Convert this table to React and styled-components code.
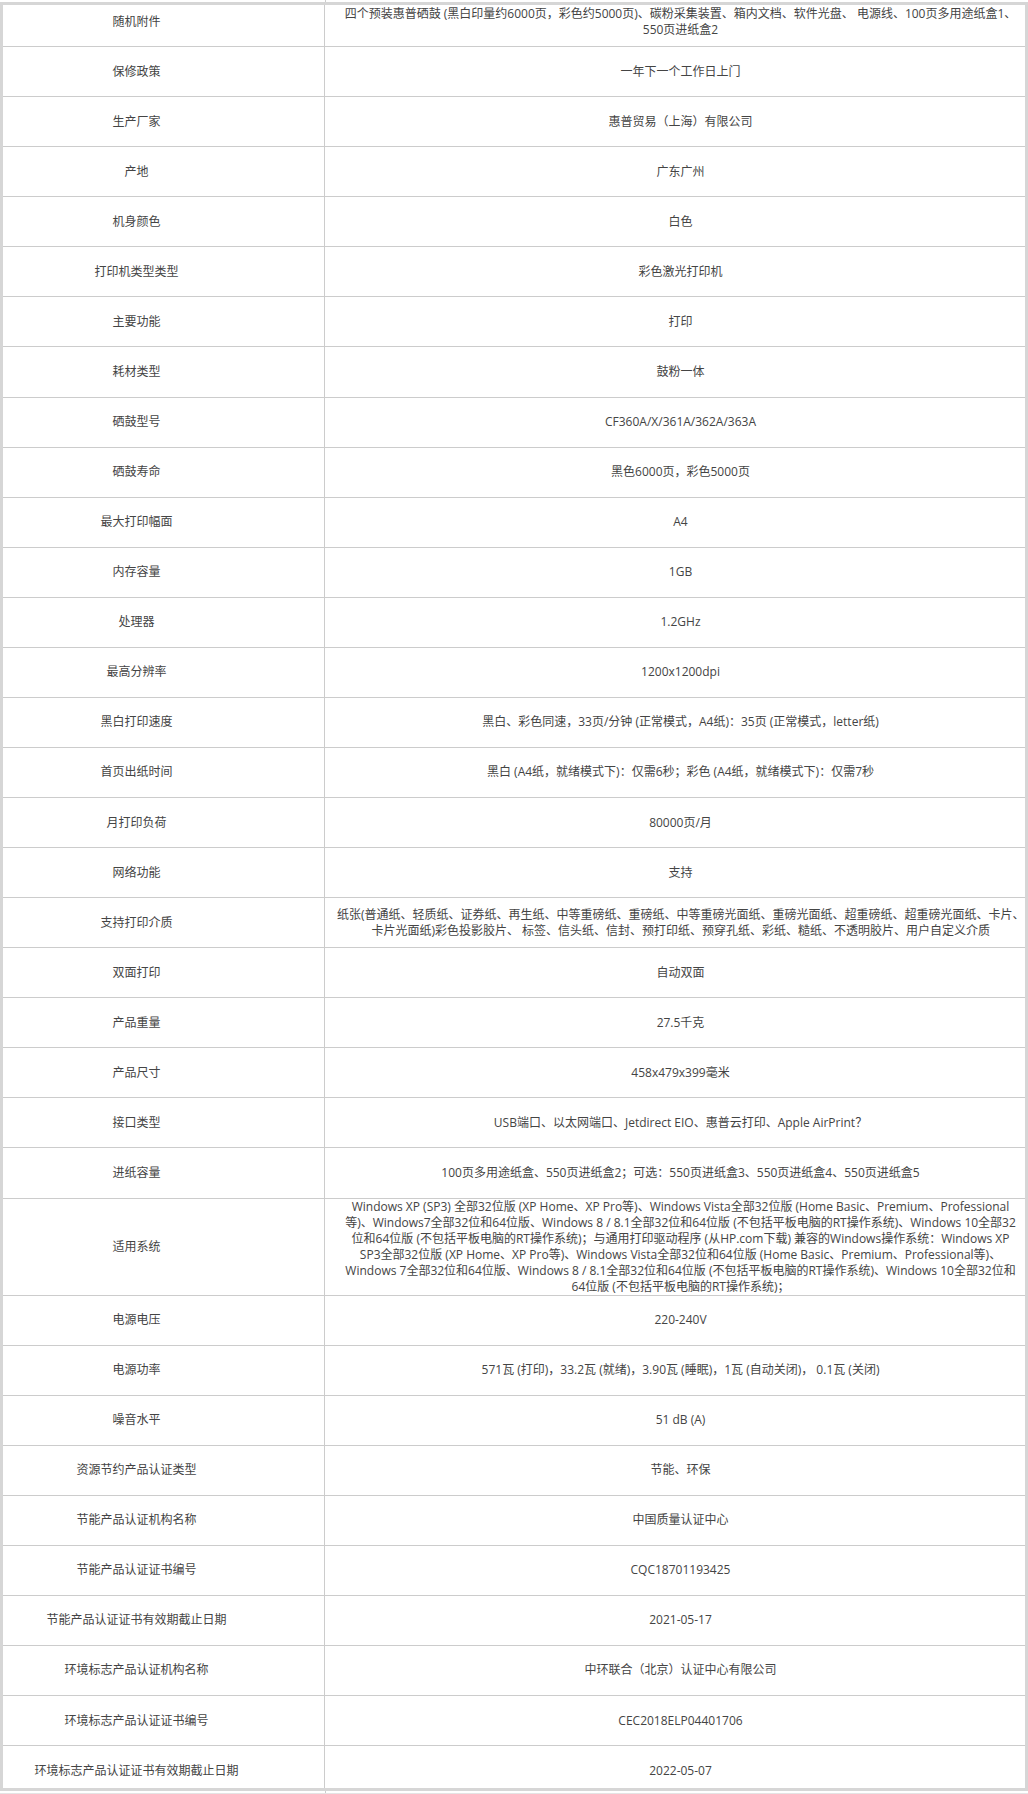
import React from "react";
import styled, { createGlobalStyle } from "styled-components";

const specs = [
  [
    "随机附件",
    [
      "四个预装惠普硒鼓 (黑白印量约6000页，彩色约5000页)、碳粉采集装置、箱内文档、软件光盘、 电源线、100页多用途纸盒1、",
      "550页进纸盒2",
    ],
  ],
  ["保修政策", "一年下一个工作日上门"],
  ["生产厂家", "惠普贸易（上海）有限公司"],
  ["产地", "广东广州"],
  ["机身颜色", "白色"],
  ["打印机类型类型", "彩色激光打印机"],
  ["主要功能", "打印"],
  ["耗材类型", "鼓粉一体"],
  ["硒鼓型号", "CF360A/X/361A/362A/363A"],
  ["硒鼓寿命", "黑色6000页，彩色5000页"],
  ["最大打印幅面", "A4"],
  ["内存容量", "1GB"],
  ["处理器", "1.2GHz"],
  ["最高分辨率", "1200x1200dpi"],
  ["黑白打印速度", "黑白、彩色同速，33页/分钟 (正常模式，A4纸)：35页 (正常模式，letter纸)"],
  ["首页出纸时间", "黑白 (A4纸，就绪模式下)：仅需6秒；彩色 (A4纸，就绪模式下)：仅需7秒"],
  ["月打印负荷", "80000页/月"],
  ["网络功能", "支持"],
  [
    "支持打印介质",
    [
      "纸张(普通纸、轻质纸、证券纸、再生纸、中等重磅纸、重磅纸、中等重磅光面纸、重磅光面纸、超重磅纸、超重磅光面纸、卡片、",
      "卡片光面纸)彩色投影胶片、 标签、信头纸、信封、预打印纸、预穿孔纸、彩纸、糙纸、不透明胶片、用户自定义介质",
    ],
  ],
  ["双面打印", "自动双面"],
  ["产品重量", "27.5千克"],
  ["产品尺寸", "458x479x399毫米"],
  ["接口类型", "USB端口、以太网端口、Jetdirect EIO、惠普云打印、Apple AirPrint？"],
  ["进纸容量", "100页多用途纸盒、550页进纸盒2；可选：550页进纸盒3、550页进纸盒4、550页进纸盒5"],
  [
    "适用系统",
    [
      "Windows XP (SP3) 全部32位版 (XP Home、XP Pro等)、Windows Vista全部32位版 (Home Basic、Premium、Professional",
      "等)、Windows7全部32位和64位版、Windows 8 / 8.1全部32位和64位版 (不包括平板电脑的RT操作系统)、Windows 10全部32",
      "位和64位版 (不包括平板电脑的RT操作系统)；与通用打印驱动程序 (从HP.com下载) 兼容的Windows操作系统：Windows XP",
      "SP3全部32位版 (XP Home、XP Pro等)、Windows Vista全部32位和64位版 (Home Basic、Premium、Professional等)、",
      "Windows 7全部32位和64位版、Windows 8 / 8.1全部32位和64位版 (不包括平板电脑的RT操作系统)、Windows 10全部32位和",
      "64位版 (不包括平板电脑的RT操作系统)；",
    ],
  ],
  ["电源电压", "220-240V"],
  ["电源功率", "571瓦 (打印)，33.2瓦 (就绪)，3.90瓦 (睡眠)，1瓦 (自动关闭)， 0.1瓦 (关闭)"],
  ["噪音水平", "51 dB (A)"],
  ["资源节约产品认证类型", "节能、环保"],
  ["节能产品认证机构名称", "中国质量认证中心"],
  ["节能产品认证证书编号", "CQC18701193425"],
  ["节能产品认证证书有效期截止日期", "2021-05-17"],
  ["环境标志产品认证机构名称", "中环联合（北京）认证中心有限公司"],
  ["环境标志产品认证证书编号", "CEC2018ELP04401706"],
  ["环境标志产品认证证书有效期截止日期", "2022-05-07"],
];

const App = () => {
  return (
    <Page>
      <GlobalStyle />
      <Edge>
        <span />
        <Rule />
      </Edge>
      <Frame>
        <Sheet>
          {specs.map(([label, value]) => (
            <Row key={label}>
              <Label>{label}</Label>
              <Value>
                {(Array.isArray(value) ? value : [value]).map((line, i) => (
                  <Line key={i}>{line}</Line>
                ))}
              </Value>
            </Row>
          ))}
        </Sheet>
      </Frame>
      <Edge $closing>
        <span />
        <Rule />
      </Edge>
    </Page>
  );
};

export default App;

const GlobalStyle = createGlobalStyle`
  html, body {
    margin: 0;
    padding: 0;
    background: #fff;
  }
  * {
    box-sizing: border-box;
  }
`;
const Page = styled.div`
  width: 1028px;
  font-family: "Open Sans", "Noto Sans CJK SC", sans-serif;
  font-size: 12px;
  line-height: 16px;
  color: #444;
`;
const Edge = styled.div`
  display: grid;
  grid-template-columns: 325px 1px;
  height: ${(p) => (p.$closing ? "3px" : "2px")};
  border-bottom: ${(p) => (p.$closing ? "1px solid #e4e4e4" : "none")};
`;
const Rule = styled.div`
  background: #ccc;
`;
const Frame = styled.div`
  width: 1028px;
  height: 1789px;
  border: 3px solid #d6d6d6;
  overflow: hidden;
`;
const Sheet = styled.div`
  margin-top: -8px;
`;
const Row = styled.div`
  display: grid;
  grid-template-columns: 322px 1fr;
  border-bottom: 1px solid #ccc;
`;
const Label = styled.div`
  display: flex;
  align-items: center;
  justify-content: center;
  min-height: 49.07px;
  padding: 0 54px 0 0;
  border-right: 1px solid #ccc;
  text-align: center;
  white-space: nowrap;
`;
const Value = styled.div`
  display: flex;
  flex-direction: column;
  align-items: center;
  justify-content: center;
  min-height: 49.07px;
  padding: 0 1px 0 12px;
  text-align: center;
`;
const Line = styled.div`
  white-space: nowrap;
`;
